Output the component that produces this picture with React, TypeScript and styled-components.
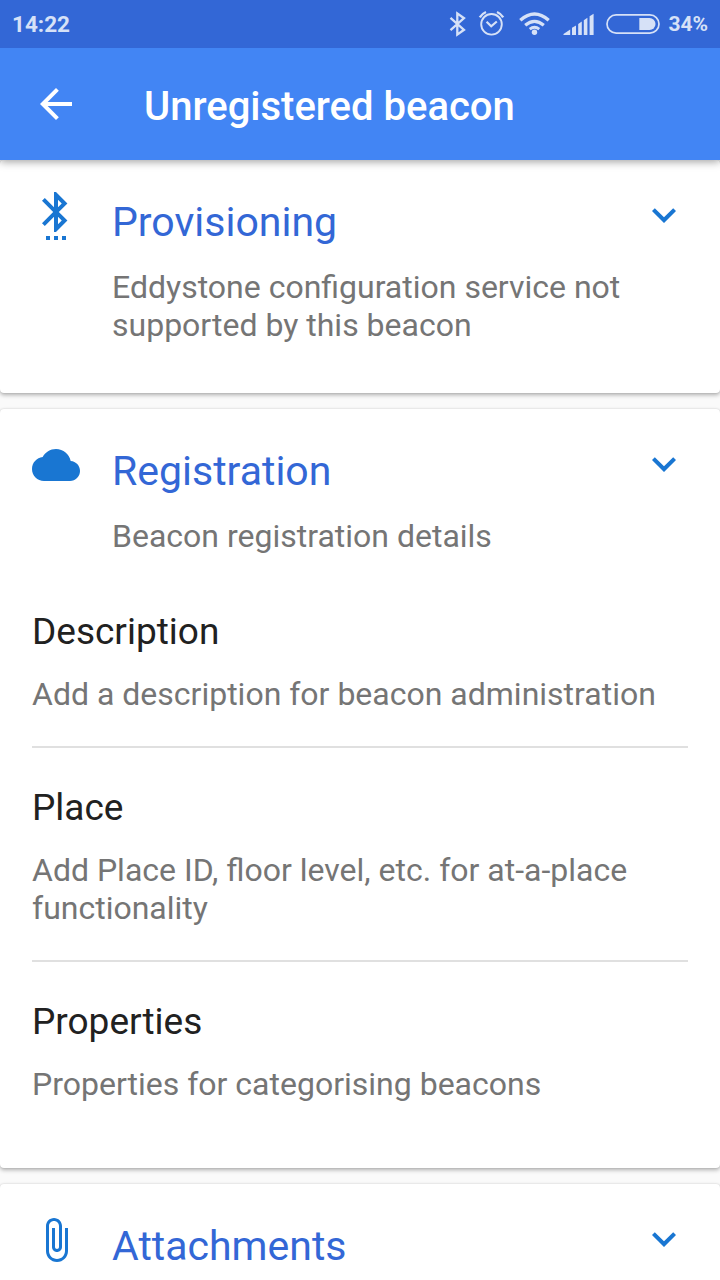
import React from "react";
import styled, { createGlobalStyle } from "styled-components";

const GlobalStyle = createGlobalStyle`
  *, *::before, *::after { box-sizing: border-box; }
  html, body { margin: 0; padding: 0; }
  body {
    background: #fafafa;
    font-family: Roboto, "Liberation Sans", sans-serif;
    overflow: hidden;
  }
  h1, h2, h3, p { margin: 0; font-weight: 400; }
`;

const Screen = styled.main`
  display: flex;
  flex-direction: column;
  width: 720px;
  height: 1280px;
  overflow: hidden;
  background: #fafafa;
`;

const StatusBar = styled.div`
  display: flex;
  flex: none;
  align-items: center;
  justify-content: space-between;
  height: 48px;
  padding: 0 12px 0 12px;
  background: #3367d6;
  color: #d6e1f7;
  z-index: 2;
`;

const StatusText = styled.span<{ $size: number }>`
  font-size: ${(p) => p.$size}px;
  font-weight: 700;
  line-height: 48px;
`;

const StatusIcons = styled.div`
  display: flex;
  align-items: center;
  height: 48px;
`;

const StatusGlyphs = styled.svg`
  display: block;
  width: 220px;
  height: 48px;
  margin-right: 4px;
`;

const AppBar = styled.header`
  display: flex;
  flex: none;
  align-items: center;
  gap: 64px;
  height: 112px;
  padding: 0 32px;
  background: #4285f4;
  color: #fff;
  box-shadow: 0 2px 8px rgba(0, 0, 0, 0.36);
  z-index: 1;
`;

const AppTitle = styled.h1`
  padding-top: 6px;
  font-size: 40px;
  font-weight: 500;
  line-height: 48px;
`;

const Glyph = styled.svg`
  display: block;
  flex: none;
  width: 48px;
  height: 48px;
  fill: currentColor;
`;

const CardList = styled.div`
  display: flex;
  flex-direction: column;
  gap: 16px;
`;

const Card = styled.section<{ $height: number }>`
  flex: none;
  height: ${(p) => p.$height}px;
  padding: 32px 32px 0;
  border-radius: 4px;
  background: #fff;
  box-shadow: 0 2px 4px rgba(0, 0, 0, 0.3), 0 0 2px rgba(0, 0, 0, 0.12);
`;

const CardHeader = styled.div`
  display: flex;
  align-items: flex-start;
  color: #1976d2;
`;

const CardHeading = styled.div`
  flex: 1;
  padding: 6px 0 0 32px;
`;

const CardTitle = styled.h2`
  color: #3367d6;
  font-size: 41px;
  line-height: 48px;
`;

const Body = styled.p`
  color: #757575;
  font-size: 32px;
  line-height: 38px;
`;

const CardSummary = styled(Body)`
  margin-top: 22px;
`;

const Chevron = styled(Glyph)`
  margin-top: -1px;
`;

const FieldList = styled.div`
  margin-top: 17px;
`;

const Field = styled.div<{ $last?: boolean }>`
  padding: 38px 0 ${(p) => (p.$last ? 0 : 33)}px;
  border-bottom: ${(p) => (p.$last ? "none" : "2px solid #e0e0e0")};
`;

const FieldTitle = styled.h3`
  margin-bottom: 22px;
  color: #212121;
  font-size: 37px;
  line-height: 43px;
`;

const PATHS = {
  back: "M20 11H7.83l5.59-5.59L12 4l-8 8 8 8 1.41-1.41L7.83 13H20v-2z",
  bluetooth:
    "M11 24h2v-2h-2v2zm-4 0h2v-2H7v2zm8 0h2v-2h-2v2zm2.71-18.29L12 0h-1v7.59L6.41 3 5 4.41 10.59 10 5 15.59 6.41 17 11 12.41V20h1l5.71-5.71-4.3-4.29 4.3-4.29zM13 3.83l1.88 1.88L13 7.59V3.83zm1.88 10.46L13 16.17v-3.76l1.88 1.88z",
  cloud:
    "M19.35 10.04C18.67 6.59 15.64 4 12 4 9.11 4 6.6 5.64 5.35 8.04 2.34 8.36 0 10.91 0 14c0 3.31 2.69 6 6 6h13c2.76 0 5-2.24 5-5 0-2.64-2.05-4.78-4.65-4.96z",
  clip:
    "M16.5 6v11.5c0 2.21-1.79 4-4 4s-4-1.79-4-4V5c0-1.38 1.12-2.5 2.5-2.5s2.5 1.12 2.5 2.5v10.5c0 .55-.45 1-1 1s-1-.45-1-1V6H10v9.5c0 1.38 1.12 2.5 2.5 2.5s2.5-1.12 2.5-2.5V5c0-2.21-1.79-4-4-4S7 2.79 7 5v12.5c0 3.04 2.46 5.5 5.5 5.5s5.5-2.46 5.5-5.5V6h-1.5z",
  expand: "M16.59 8.59L12 13.17 7.41 8.59 6 10l6 6 6-6z",
};

function StatusSymbols() {
  return (
    <StatusGlyphs viewBox="444 0 220 48" fill="none" stroke="currentColor">
      {/* bluetooth */}
      <path d="M450.5 17.8L464 29.8L457.3 34.6V13.4L464 18.2L450.5 30.2" strokeWidth="2.3" />
      {/* alarm */}
      <circle cx="491.5" cy="24.3" r="10.3" strokeWidth="1.9" />
      <path d="M486.6 21.8l4.6 4.5 5.6-4.8" strokeWidth="2.2" />
      <path d="M479.8 17.4q2-3.6 6.2-5.4M503.2 17.4q-2-3.6-6.2-5.4" strokeWidth="2.4" />
      {/* wifi */}
      <path d="M520.3 20.3q14.2-12.4 28.4 0" strokeWidth="3.4" />
      <path d="M525.2 25.3q9.3-8 18.6 0" strokeWidth="3.2" />
      <path d="M529.7 29.2q4.8-3.8 9.6 0" strokeWidth="2.8" />
      <circle cx="534.5" cy="32.2" r="2.7" fill="currentColor" stroke="none" />
      {/* signal */}
      <path
        d="M563.5 35v-1l6.7-4.5V35zM572 35v-7.2l4-2.4V35zM578.2 35V24l3.6-2.4V35zM583.8 35V20.3l3.6-2.5V35zM589.6 35V16.3l4-2.6V35z"
        fill="currentColor"
        stroke="none"
      />
      {/* battery */}
      <rect x="607" y="14.9" width="52" height="18.2" rx="9.1" strokeWidth="1.7" />
      <path d="M639.3 18H649.5a6 6 0 0 1 0 12H639.3z" fill="currentColor" stroke="none" />
    </StatusGlyphs>
  );
}

function Icon({ name }: { name: keyof typeof PATHS }) {
  return (
    <Glyph viewBox="0 0 24 24">
      <path d={PATHS[name]} />
    </Glyph>
  );
}

function Header({
  icon,
  title,
  children,
}: {
  icon: keyof typeof PATHS;
  title: string;
  children?: React.ReactNode;
}) {
  return (
    <CardHeader>
      <Icon name={icon} />
      <CardHeading>
        <CardTitle>{title}</CardTitle>
        {children && <CardSummary>{children}</CardSummary>}
      </CardHeading>
      <Chevron viewBox="0 0 24 24">
        <path d={PATHS.expand} />
      </Chevron>
    </CardHeader>
  );
}

export default function App() {
  return (
    <>
      <GlobalStyle />
      <Screen>
        <StatusBar>
          <StatusText $size={22.5}>14:22</StatusText>
          <StatusIcons>
            <StatusSymbols />
            <StatusText $size={21}>34%</StatusText>
          </StatusIcons>
        </StatusBar>
        <AppBar>
          <Icon name="back" />
          <AppTitle>Unregistered beacon</AppTitle>
        </AppBar>
        <CardList>
          <Card $height={233}>
            <Header icon="bluetooth" title="Provisioning">
              Eddystone configuration service not
              <br />
              supported by this beacon
            </Header>
          </Card>
          <Card $height={759}>
            <Header icon="cloud" title="Registration">
              Beacon registration details
            </Header>
            <FieldList>
              <Field>
                <FieldTitle>Description</FieldTitle>
                <Body>Add a description for beacon administration</Body>
              </Field>
              <Field>
                <FieldTitle>Place</FieldTitle>
                <Body>Add Place ID, floor level, etc. for at-a-place functionality</Body>
              </Field>
              <Field $last>
                <FieldTitle>Properties</FieldTitle>
                <Body>Properties for categorising beacons</Body>
              </Field>
            </FieldList>
          </Card>
          <Card $height={160}>
            <Header icon="clip" title="Attachments" />
          </Card>
        </CardList>
      </Screen>
    </>
  );
}
